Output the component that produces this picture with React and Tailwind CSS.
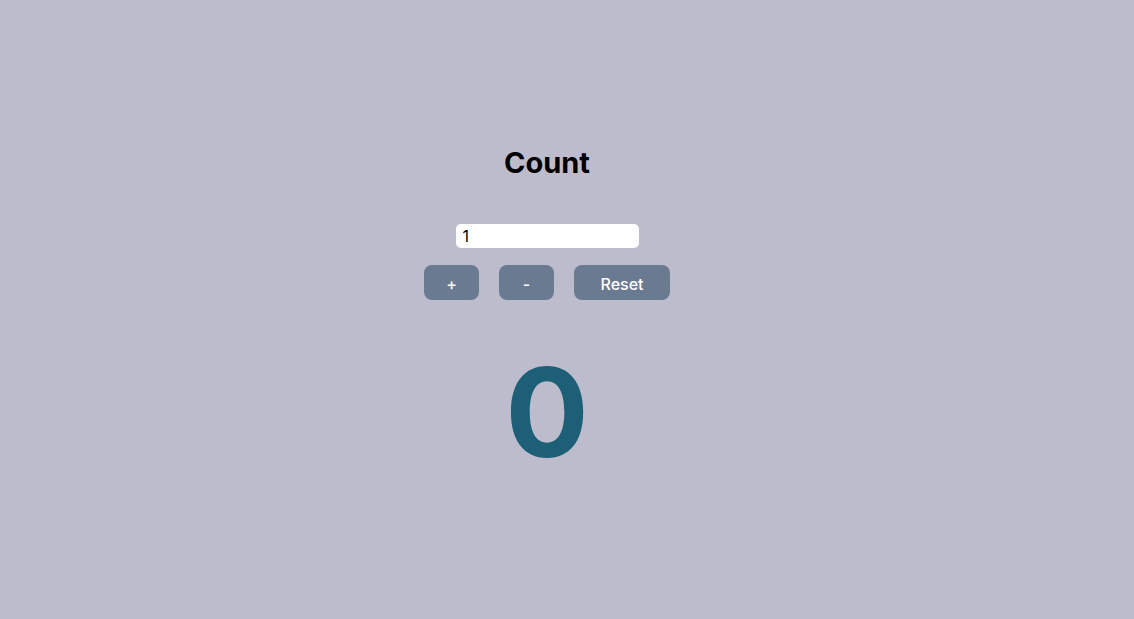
import { useState } from "react"

export default function App() {
  const [step, setStep] = useState("1")
  const [count, setCount] = useState(0)
  const n = Number(step) || 0

  return (
    <div className="min-h-screen w-full bg-[#bdbccc] font-['Inter',sans-serif]">
      <div className="flex flex-col items-center pr-[40px] pt-[145px]">
        <h1 className="text-[29px] font-bold leading-[36px] text-black">Count</h1>

        <input
          value={step}
          onChange={(e) => setStep(e.target.value)}
          className="mt-[43px] h-[24px] w-[183px] rounded-[5px] bg-white px-[7px] text-[16px] text-black outline-none"
        />

        <div className="mt-[17px] flex gap-[20px]">
          <button
            onClick={() => setCount((c) => c + n)}
            className="h-[35px] w-[55px] rounded-[8px] bg-[#6a7a90] pt-[2px] text-[16px] font-medium text-white"
          >
            +
          </button>
          <button
            onClick={() => setCount((c) => c - n)}
            className="h-[35px] w-[55px] rounded-[8px] bg-[#6a7a90] pt-[2px] text-[16px] font-medium text-white"
          >
            -
          </button>
          <button
            onClick={() => setCount(0)}
            className="h-[35px] w-[96px] rounded-[8px] bg-[#6a7a90] pt-[2px] text-[16px] font-medium text-white"
          >
            Reset
          </button>
        </div>

        <div className="mt-[50px] text-[124px] font-bold leading-none text-[#1e5f78]">{count}</div>
      </div>
    </div>
  )
}
